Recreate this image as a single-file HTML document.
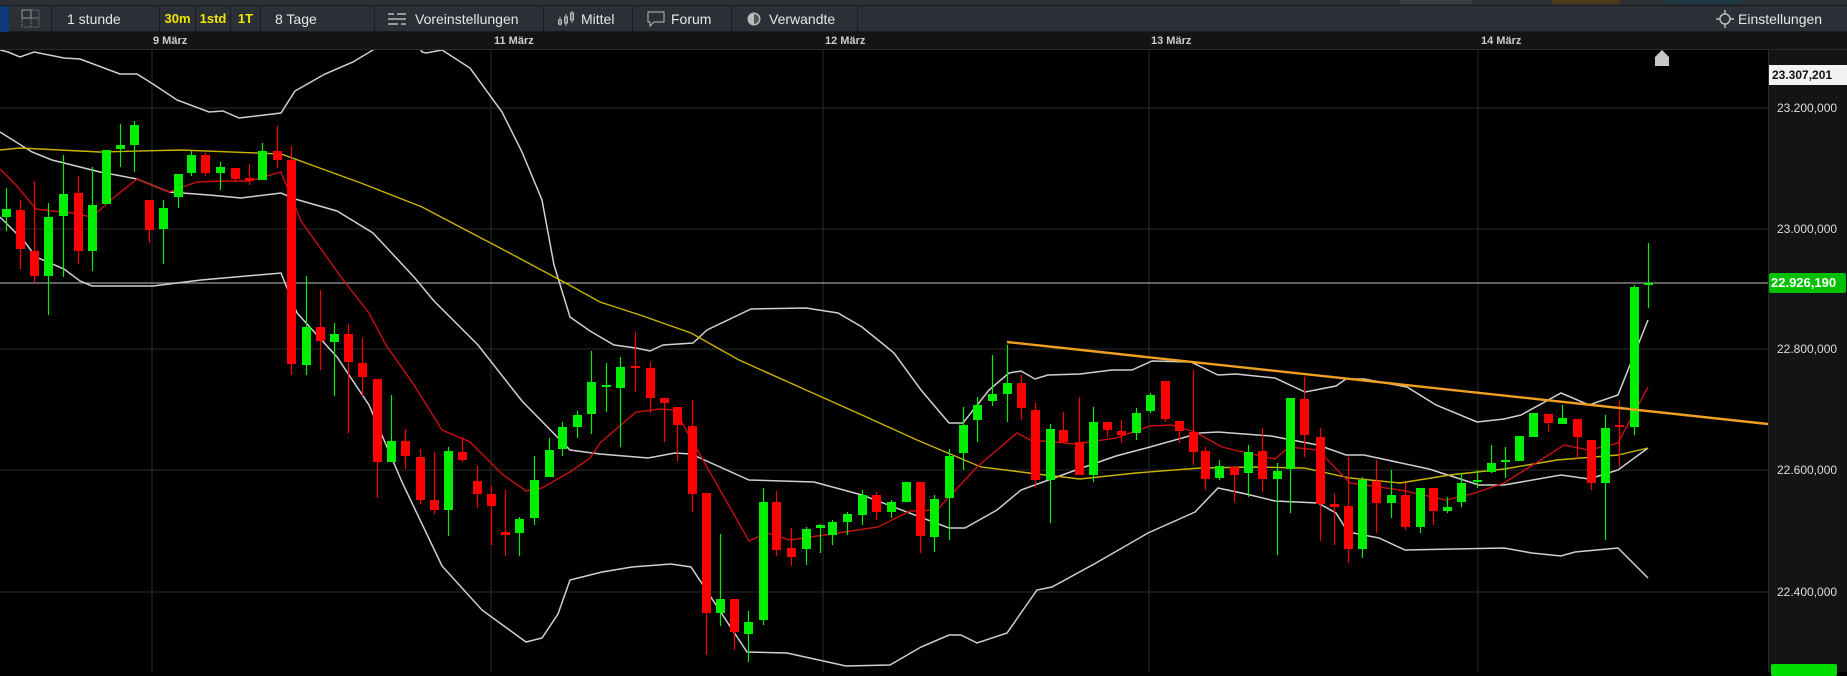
<!DOCTYPE html>
<html><head><meta charset="utf-8"><style>
*{margin:0;padding:0;box-sizing:border-box}
body{width:1847px;height:672px;background:#000;overflow:hidden;font-family:"Liberation Sans",sans-serif;position:relative}
.top{position:absolute;left:0;top:0;width:1847px;height:5px;background:#2c3034}
.tb{position:absolute;left:0;top:5px;width:1847px;height:27px;background:#2b3036;border-top:1px solid #1a1d20;border-bottom:1px solid #1a1d20}
.seg{position:absolute;top:0;height:26px;border-right:1px solid #1a1d20;color:#e6e6e6;font-size:14px;line-height:26px}
.y{color:#f2e600;font-weight:bold;font-size:13px}
.ax{position:absolute;left:0;top:32px;width:1847px;height:18px;background:#141414;border-bottom:1px solid #2a2a2a}
.ax span{position:absolute;top:3px;font-size:11px;font-weight:bold;color:#ccc}
.ra{position:absolute;left:1768px;top:50px;width:79px;height:622px;background:#141414;border-left:1px solid #2a2a2a}
.pl{position:absolute;left:1770px;font-size:12px;color:#ddd}
</style></head><body>
<div class="top">
<div style="position:absolute;left:1400px;width:72px;height:4px;background:#3a3e42"></div>
<div style="position:absolute;left:1552px;width:68px;height:4px;background:#4a3a1c"></div>
<div style="position:absolute;left:1665px;width:76px;height:4px;background:#1c3a44"></div>
</div>
<div class="tb">
<div style="position:absolute;left:0;top:0;width:9px;height:26px;background:#0d3a78"></div>
<div class="seg" style="left:9px;width:43px"><svg width="43" height="26"><rect x="13" y="4" width="17" height="17" fill="none" stroke="#777" stroke-dasharray="1.5 1"/><line x1="13" y1="12" x2="30" y2="12" stroke="#777"/><line x1="22" y1="4" x2="22" y2="21" stroke="#777" stroke-dasharray="1.5 1"/><rect x="13" y="4" width="9" height="8" fill="none" stroke="#999"/></svg></div>
<div class="seg" style="left:52px;width:108px;padding-left:15px">1 stunde</div>
<div class="seg y" style="left:160px;width:36px;text-align:center">30m</div>
<div class="seg y" style="left:196px;width:35px;text-align:center">1std</div>
<div class="seg y" style="left:231px;width:30px;text-align:center">1T</div>
<div class="seg" style="left:261px;width:114px;padding-left:14px">8 Tage</div>
<div class="seg" style="left:375px;width:169px;padding-left:13px"><svg width="20" height="14" style="vertical-align:-2px;margin-right:7px"><g stroke="#bbb" stroke-width="1.5"><line x1="0" y1="2" x2="6" y2="2"/><line x1="9" y1="2" x2="18" y2="2"/><line x1="0" y1="7" x2="18" y2="7"/><line x1="0" y1="12" x2="10" y2="12"/><line x1="13" y1="12" x2="18" y2="12"/></g></svg>Voreinstellungen</div>
<div class="seg" style="left:544px;width:89px;padding-left:13px"><svg width="18" height="16" style="vertical-align:-3px;margin-right:6px"><g stroke="#bbb" fill="none"><line x1="3" y1="6" x2="3" y2="15"/><rect x="1.5" y="9" width="3" height="4"/><line x1="9" y1="3" x2="9" y2="15"/><rect x="7.5" y="6" width="3" height="6"/><line x1="15" y1="0" x2="15" y2="12"/><rect x="13.5" y="2" width="3" height="7"/></g></svg>Mittel</div>
<div class="seg" style="left:633px;width:99px;padding-left:14px"><svg width="18" height="16" style="vertical-align:-3px;margin-right:6px"><path d="M1 1H17V11H7L3 15V11H1Z" fill="none" stroke="#bbb"/></svg>Forum</div>
<div class="seg" style="left:732px;width:126px;padding-left:14px"><svg width="16" height="16" style="vertical-align:-3px;margin-right:7px"><circle cx="8" cy="8" r="6.5" fill="#bbb"/><path d="M8 3A5 5 0 0 1 8 13Z" fill="#555"/></svg>Verwandte</div>
<div style="position:absolute;left:1716px;top:0;height:26px;line-height:26px;color:#e6e6e6;font-size:14px"><svg width="18" height="18" style="vertical-align:-4px;margin-right:4px"><circle cx="9" cy="9" r="5" fill="none" stroke="#bbb" stroke-width="1.5"/><g stroke="#bbb" stroke-width="1.5"><line x1="9" y1="0" x2="9" y2="4"/><line x1="9" y1="14" x2="9" y2="18"/><line x1="0" y1="9" x2="4" y2="9"/><line x1="14" y1="9" x2="18" y2="9"/></g></svg>Einstellungen</div>
</div>
<div class="ax"><span style="left:153px">9 März</span><span style="left:494px">11 März</span><span style="left:825px">12 März</span><span style="left:1151px">13 März</span><span style="left:1481px">14 März</span></div>
<svg id="ch" width="1768" height="622" viewBox="0 50 1768 622" style="position:absolute;left:0;top:50px"></svg>
<div class="ra"></div>
<div class="pl" style="top:65px;left:1769px;width:78px;height:20px;background:#f2f2f2;color:#111;font-weight:bold;line-height:20px;padding-left:3px">23.307,201</div>
<div class="pl" style="top:101px;left:1777px">23.200,000</div>
<div class="pl" style="top:222px;left:1777px">23.000,000</div>
<div class="pl" style="top:273px;left:1769px;width:77px;height:20px;background:#00c000;color:#fff;font-weight:bold;line-height:20px;padding-left:2px;font-size:13px;border-radius:2px">22.926,190</div>
<div class="pl" style="top:342px;left:1777px">22.800,000</div>
<div class="pl" style="top:463px;left:1777px">22.600,000</div>
<div class="pl" style="top:585px;left:1777px">22.400,000</div>
<div class="pl" style="top:664px;left:1771px;width:66px;height:12px;background:#00dd00;border-radius:2px"></div>
<script>
var C=[[6,'G',209,217,188,231],[20,'R',210,249,200,269],[34,'R',251,276,181,283],[48,'G',217,276,203,315],[63,'G',194,216,155,277],[78,'R',193,251,176,264],[92,'G',205,251,167,271],[106,'G',150,204,150,204],[120,'G',145,149,124,167],[134,'G',125,145,121,172],[149,'R',200,230,200,243],[163,'G',208,229,200,264],[178,'G',174,197,174,208],[191,'G',155,173,151,176],[205,'R',155,173,153,176],[220,'G',167,173,162,190],[235,'R',168,179,168,182],[249,'R',179,180,164,185],[262,'G',151,180,143,180],[277,'R',151,160,126,168],[291,'R',160,364,146,375],[306,'G',327,365,276,375],[320,'R',327,341,290,370],[334,'G',334,342,323,396],[348,'R',334,362,324,433],[362,'R',363,377,338,396],[377,'R',379,462,379,498],[391,'G',441,462,395,462],[405,'R',441,456,429,469],[420,'R',457,500,449,504],[434,'R',500,510,452,514],[448,'G',451,510,447,536],[462,'R',452,460,437,462],[477,'R',481,494,466,508],[491,'R',494,506,486,545],[505,'R',532,535,490,556],[519,'G',519,533,517,556],[534,'G',480,518,456,525],[549,'G',450,477,438,477],[562,'G',427,449,422,456],[577,'G',415,427,411,438],[591,'G',382,414,351,434],[606,'G',385,387,363,412],[620,'G',367,388,357,447],[635,'R',366,368,332,392],[650,'R',368,398,362,413],[664,'R',398,403,398,442],[677,'R',407,425,407,461],[692,'R',426,494,400,512],[706,'R',493,613,493,655],[720,'G',599,613,534,626],[734,'R',599,632,599,650],[748,'G',622,634,611,662],[763,'G',502,620,488,625],[776,'R',502,550,491,556],[791,'R',548,557,528,566],[806,'G',529,549,527,565],[820,'G',525,528,524,553],[832,'G',522,535,520,545],[847,'G',514,522,512,535],[862,'G',495,515,490,525],[876,'R',495,512,492,520],[891,'G',502,512,500,518],[906,'G',482,502,482,502],[920,'R',482,536,482,553],[934,'G',499,537,495,552],[949,'G',456,498,449,540],[963,'G',425,453,407,470],[977,'G',405,420,397,442],[992,'G',394,401,355,406],[1007,'G',383,394,345,422],[1021,'R',383,408,375,420],[1035,'R',410,480,403,487],[1050,'G',429,480,424,523],[1063,'R',430,442,412,443],[1079,'R',442,475,397,475],[1093,'G',422,475,407,482],[1107,'R',422,430,422,437],[1121,'R',431,435,420,443],[1136,'G',413,433,408,440],[1150,'G',395,411,393,413],[1165,'R',381,419,381,422],[1179,'R',421,431,421,443],[1193,'R',432,452,370,465],[1205,'R',451,479,447,490],[1219,'G',466,478,460,480],[1234,'R',467,475,467,502],[1248,'G',452,473,445,497],[1262,'R',451,479,428,492],[1277,'G',471,479,463,555],[1290,'G',398,469,398,513],[1304,'R',399,435,377,457],[1320,'R',437,504,428,541],[1334,'R',505,506,493,545],[1348,'R',506,549,457,563],[1362,'G',480,549,477,558],[1376,'R',481,503,460,533],[1391,'G',495,503,470,518],[1405,'R',495,527,483,530],[1420,'G',488,527,488,533],[1433,'R',488,511,488,525],[1447,'G',507,511,497,513],[1461,'G',483,502,473,507],[1477,'G',480,482,470,488],[1491,'G',463,472,445,473],[1505,'G',460,462,447,478],[1519,'G',436,461,436,461],[1533,'G',413,437,413,437],[1548,'R',414,423,414,432],[1562,'G',418,424,405,424],[1577,'R',419,437,419,459],[1591,'R',440,483,440,490],[1605,'G',428,483,415,540],[1619,'R',425,427,400,467],[1634,'G',287,427,285,435],[1648,'G',283,285,243,308]];
var UP=[[0,50],[8,52],[20,57],[34,52],[64,58],[80,59],[120,74],[137,74],[153,84],[177,100],[209,112],[223,111],[239,118],[281,113],[295,91],[325,74],[353,62],[373,50],[380,40],[415,40],[422,52],[426,53],[442,50],[470,68],[502,112],[522,152],[542,200],[554,265],[570,317],[590,331],[614,345],[636,348],[650,351],[663,345],[693,343],[707,330],[751,309],[806,308],[838,313],[862,327],[894,353],[921,390],[949,423],[963,423],[989,390],[1009,373],[1021,371],[1035,379],[1048,375],[1080,374],[1112,370],[1132,370],[1152,361],[1191,362],[1218,375],[1236,374],[1275,378],[1305,392],[1336,386],[1346,379],[1364,379],[1407,387],[1436,405],[1477,422],[1504,419],[1521,415],[1561,393],[1589,405],[1618,395],[1648,320]];
var MID=[[0,132],[32,152],[52,160],[100,172],[137,179],[169,192],[209,195],[241,198],[281,193],[295,199],[337,211],[373,233],[414,277],[434,301],[478,345],[522,401],[570,450],[600,454],[648,458],[675,453],[691,454],[749,480],[814,482],[862,495],[949,528],[965,528],[997,510],[1021,490],[1076,470],[1116,456],[1150,447],[1200,433],[1218,432],[1271,436],[1318,445],[1346,455],[1364,455],[1429,469],[1479,485],[1504,485],[1561,475],[1589,479],[1618,470],[1648,448]];
var LO=[[0,217],[24,241],[36,257],[64,269],[80,281],[92,286],[153,286],[201,280],[281,273],[297,313],[337,357],[369,405],[402,482],[442,566],[482,610],[526,642],[542,638],[558,614],[570,580],[602,572],[632,567],[671,564],[691,567],[747,652],[787,653],[846,666],[890,665],[921,647],[949,635],[961,635],[977,643],[1007,633],[1037,590],[1052,587],[1096,563],[1148,533],[1195,512],[1218,488],[1246,494],[1275,501],[1318,503],[1336,513],[1348,532],[1379,538],[1405,550],[1504,548],[1532,553],[1561,556],[1575,552],[1618,548],[1648,578]];
var RED=[[0,169],[16,185],[36,209],[52,211],[72,213],[92,217],[112,199],[137,179],[169,192],[197,182],[225,181],[249,181],[281,172],[301,221],[341,277],[369,313],[386,345],[414,385],[442,430],[470,442],[502,474],[526,491],[542,488],[570,472],[590,458],[600,443],[636,412],[660,409],[675,410],[707,467],[749,541],[767,533],[790,540],[838,533],[878,527],[910,511],[937,510],[949,497],[977,467],[1017,433],[1030,440],[1076,444],[1116,438],[1150,426],[1171,425],[1195,432],[1222,447],[1234,450],[1275,459],[1289,447],[1318,450],[1350,483],[1400,490],[1446,500],[1475,493],[1504,483],[1536,463],[1564,445],[1589,450],[1618,443],[1648,387]];
var YEL=[[0,150],[20,148],[100,152],[181,150],[281,154],[361,183],[422,207],[502,249],[562,281],[600,302],[640,315],[691,333],[739,360],[806,390],[862,415],[917,440],[981,467],[1037,474],[1080,479],[1136,473],[1200,468],[1254,467],[1304,468],[1350,478],[1400,483],[1450,475],[1504,469],[1557,460],[1618,455],[1648,448]];
var s='';
[108,229,349,470,592].forEach(function(y){s+='<line x1="0" y1="'+y+'" x2="1768" y2="'+y+'" stroke="#2b2b2b"/>'});
[152,491,823,1149,1478].forEach(function(x){s+='<line x1="'+x+'" y1="50" x2="'+x+'" y2="672" stroke="#2b2b2b"/>'});
s+='<line x1="0" y1="283" x2="1768" y2="283" stroke="#9a9a9a" stroke-width="1.3"/>';
function pl(a,c,w){return '<polyline fill="none" stroke="'+c+'" stroke-width="'+w+'" points="'+a.map(function(p){return p.join(',')}).join(' ')+'"/>';}
s+=pl(UP,'#d0d0d0',1.5)+pl(MID,'#d0d0d0',1.5)+pl(LO,'#d0d0d0',1.5)+pl(YEL,'#c8b400',1.4)+pl(RED,'#c81010',1.4);
C.forEach(function(c){var col=c[1]=='G'?'#00ee00':'#ff0000';var t=Math.min(c[2],c[3]),b=Math.max(c[2],c[3]);if(b-t<2){t-=1;b+=1;}
s+='<line x1="'+(c[0]+0.5)+'" y1="'+c[4]+'" x2="'+(c[0]+0.5)+'" y2="'+c[5]+'" stroke="'+col+'" stroke-width="1.2"/>';
s+='<rect x="'+(c[0]-4)+'" y="'+t+'" width="9" height="'+(b-t)+'" fill="'+col+'"/>';});
s+='<line x1="1007" y1="342" x2="1768" y2="424" stroke="#f0a020" stroke-width="2.4"/>';
s+='<path d="M1655 66V57L1662 50L1669 57V66Z" fill="#c8c8c8"/>';
document.getElementById('ch').innerHTML=s;
</script>
</body></html>
